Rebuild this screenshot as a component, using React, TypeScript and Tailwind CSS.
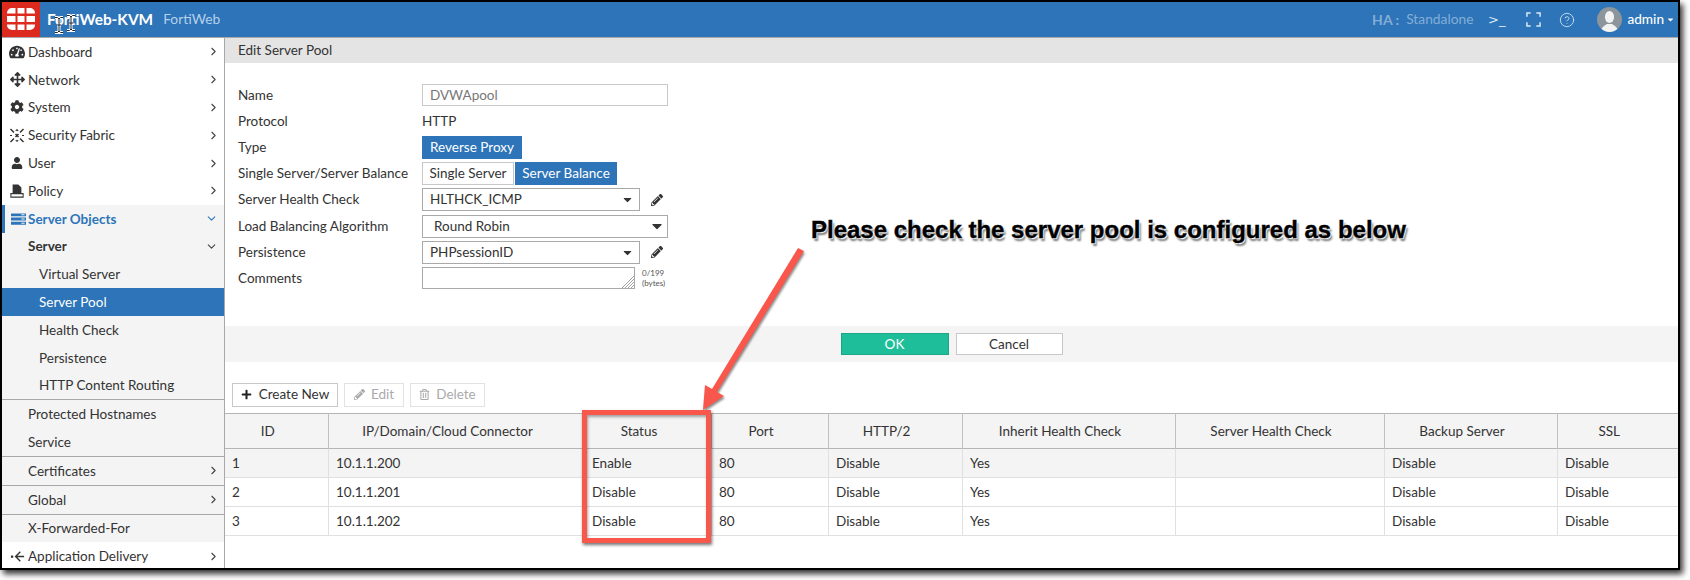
import React from 'react';
import { FaTachometerAlt, FaArrowsAlt, FaCog, FaUser, FaPencilAlt, FaPlus, FaRegTrashAlt, FaCaretDown } from 'react-icons/fa';
import { LuChevronRight, LuChevronDown, LuCircleHelp } from 'react-icons/lu';

const FabricIcon = () => (
  <svg viewBox="0 0 16 16" className="w-[16px] h-[16px]" fill="none" stroke="#333" strokeWidth="1.5">
    <path d="M1.500 2 5 5.500M6.500 7 9.500 10M11 11.500 14.500 15M14.500 2 11 5.500M9.500 7 6.500 10M5 11.500 1.500 15" />
    <path d="M8 2.500 6.800 4M8 2.500 9.200 4M8 14.500 6.800 13M8 14.500 9.200 13M1 8.500h2M13 8.500h2" strokeWidth="1.100" />
  </svg>
);

const DeliveryIcon = () => (
  <svg viewBox="0 0 16 16" className="w-[15px] h-[15px]" fill="none" stroke="#333" strokeWidth="1.500">
    <path d="M15 8H7M11 3 6 8l5 5" />
    <rect x="1" y="7" width="2.400" height="2.400" fill="#333" stroke="none" />
  </svg>
);

const PolicyIcon = () => (
  <svg viewBox="0 0 16 16" className="w-[14px] h-[14px]">
    <path d="M3 0.500h6.500L13 4v7H3z" fill="#333" />
    <path d="M1 11h14v4H1z" fill="#fff" stroke="#333" strokeWidth="1.200" />
  </svg>
);

const ServerIcon = () => (
  <svg viewBox="0 0 16 14" className="w-[15px] h-[14px]" fill="#2d74b8">
    <path d="M0 1h16v3H0zM0 5.500h16v3H0zM0 10h16v3H0z" />
    <path d="M11 2h3.500v1H11zM11 6.500h3.500v1H11zM11 11h3.500v1H11z" fill="#f4f4f4" />
  </svg>
);

const FortinetLogo = () => (
  <svg viewBox="0 0 28 22" className="w-[28px] h-[22px]" fill="#fff">
    <path d="M10.500 0h7v5.500h-7zM10.500 8h7v6h-7zM10.500 16.500h7V22h-7z" />
    <path d="M8.500 0H5a5 5 0 0 0-5 5v.500h8.500zM19.500 0H23a5 5 0 0 1 5 5v.500h-8.500zM0 8h8.500v6H0zM19.500 8H28v6h-8.500zM0 16.500h8.500V22H5a5 5 0 0 1-5-5zM19.500 16.500H28v.500a5 5 0 0 1-5 5h-3.500z" />
  </svg>
);

const IBeam = ({ className }: { className: string }) => (
  <svg viewBox="0 0 10 18" className={`absolute w-[10px] h-[18px] ${className}`}>
    <path d="M1 1.500h2.500L5 3l1.500-1.500H9M5 3v12M1 16.500h2.500L5 15l1.500 1.500H9M3 9h4" fill="none" stroke="#fff" strokeWidth="3" />
    <path d="M1 1.500h2.500L5 3l1.500-1.500H9M5 3v12M1 16.500h2.500L5 15l1.500 1.500H9M3 9h4" fill="none" stroke="#222" strokeWidth="1" />
  </svg>
);

type NavItem = {
  label: string;
  icon?: React.ReactNode;
  arrow?: 'right' | 'down';
  tone?: 'plain' | 'open' | 'group' | 'child' | 'active' | 'sub';
  divider?: boolean;
};

const navItems: NavItem[] = [
  { label: 'Dashboard', icon: <FaTachometerAlt size={16} />, arrow: 'right' },
  { label: 'Network', icon: <FaArrowsAlt size={15} />, arrow: 'right' },
  { label: 'System', icon: <FaCog size={14} />, arrow: 'right' },
  { label: 'Security Fabric', icon: <FabricIcon />, arrow: 'right' },
  { label: 'User', icon: <FaUser size={12} />, arrow: 'right' },
  { label: 'Policy', icon: <PolicyIcon />, arrow: 'right' },
  { label: 'Server Objects', icon: <ServerIcon />, arrow: 'down', tone: 'open' },
  { label: 'Server', arrow: 'down', tone: 'group' },
  { label: 'Virtual Server', tone: 'child' },
  { label: 'Server Pool', tone: 'active' },
  { label: 'Health Check', tone: 'child' },
  { label: 'Persistence', tone: 'child' },
  { label: 'HTTP Content Routing', tone: 'child', divider: true },
  { label: 'Protected Hostnames', tone: 'sub' },
  { label: 'Service', tone: 'sub', divider: true },
  { label: 'Certificates', tone: 'sub', arrow: 'right', divider: true },
  { label: 'Global', tone: 'sub', arrow: 'right', divider: true },
  { label: 'X-Forwarded-For', tone: 'sub' },
  { label: 'Application Delivery', icon: <DeliveryIcon />, arrow: 'right' },
];

const SidebarRow = ({ item }: { item: NavItem }) => {
  const tone = item.tone ?? 'plain';
  let cls = 'bg-white text-[#333]';
  if (tone === 'open') cls = 'bg-[#f4f4f4] text-[#2d74b8] font-bold border-l-[3px] border-[#2d74b8]';
  if (tone === 'group') cls = 'bg-[#f4f4f4] text-[#333] font-bold';
  if (tone === 'child' || tone === 'sub') cls = 'bg-[#f4f4f4] text-[#333]';
  if (tone === 'active') cls = 'bg-[#2d74b8] text-white';
  const indent = tone === 'child' || tone === 'active' ? 'pl-[37px]' : tone === 'open' ? 'pl-[23px]' : 'pl-[26px]';
  return (
    <div className={`relative shrink-0 flex items-center pr-[4px] ${indent} ${cls} ${item.divider ? 'h-[28.8px] border-b border-[#a8a8a8]' : 'h-[27.8px]'}`}>
      {item.icon && (
        <span className={`absolute w-[16px] flex justify-center text-[#333] ${tone === 'open' ? 'left-[5px]' : 'left-[7px]'}`}>
          {item.icon}
        </span>
      )}
      <span className="flex-1">{item.label}</span>
      {item.arrow === 'right' && <LuChevronRight size={13} className="text-[#444]" />}
      {item.arrow === 'down' && <LuChevronDown size={13} className={tone === 'open' ? 'text-[#2d74b8] mr-[2px]' : 'text-[#444] mr-[2px]'} />}
    </div>
  );
};

const FormRow = ({ label, h, children }: { label: string; h: string; children?: React.ReactNode }) => (
  <div className={`flex items-center ${h}`}>
    <div className="w-[184px] shrink-0">{label}</div>
    {children}
  </div>
);

const SelectBox = ({ value, wide }: { value: string; wide?: boolean }) => (
  <div className={`h-[23px] border border-[#a9a9a9] flex items-center justify-between ${wide ? 'w-[246px] pl-[11px] pr-[2px]' : 'w-[218px] pl-[7px] pr-[5px]'}`}>
    <span>{value}</span>
    <FaCaretDown size={wide ? 16 : 13} className="text-[#333]" />
  </div>
);

const columns = ['ID', 'IP/Domain/Cloud Connector', 'Status', 'Port', 'HTTP/2', 'Inherit Health Check', 'Server Health Check', 'Backup Server', 'SSL'];
const colWidths = ['w-[103px]', 'w-[256px]', 'w-[127px]', 'w-[117px]', 'w-[134px]', 'w-[213px]', 'w-[209px]', 'w-[173px]', 'w-[121px]'];
const rows = [
  ['1', '10.1.1.200', 'Enable', '80', 'Disable', 'Yes', '', 'Disable', 'Disable'],
  ['2', '10.1.1.201', 'Disable', '80', 'Disable', 'Yes', '', 'Disable', 'Disable'],
  ['3', '10.1.1.202', 'Disable', '80', 'Disable', 'Yes', '', 'Disable', 'Disable'],
];

export default function App() {
  return (
    <div className="w-[1690px] h-[580px] bg-white overflow-hidden">
      <div className="relative w-[1680px] h-[570px] border-2 border-black flex flex-col text-[13.5px] text-[#333] shadow-[3px_4px_6px_rgba(0,0,0,0.8)] font-['Lato',sans-serif]">
        {/* Top bar */}
        <header className="h-[36px] shrink-0 bg-[#2d74b8] border-b border-[#a8a8a8] flex items-center text-white">
          <div className="w-[38px] h-full bg-[#dc2a1e] flex items-center justify-center pb-[1px]">
            <FortinetLogo />
          </div>
          <span className="ml-[7px] text-[15.4px] font-bold">FortiWeb-KVM</span>
          <span className="ml-[10px] text-[13.8px] text-[#b5d0ea]">FortiWeb</span>
          <span className="ml-auto text-[14px] font-bold text-[#84aed6]">HA :</span>
          <span className="ml-[7px] text-[13.8px] text-[#84aed6]">Standalone</span>
          <span className="ml-[14.5px] text-[13px] text-[#dce8f4] font-['DejaVu_Sans',sans-serif]">&gt;_</span>
          <svg viewBox="0 0 16 16" className="ml-[21px] w-[15px] h-[15px]" fill="none" stroke="#dce8f4" strokeWidth="1.600">
            <path d="M1 5V1h4M11 1h4v4M15 11v4h-4M5 15H1v-4" />
          </svg>
          <LuCircleHelp size={16} className="ml-[18px] text-[#d5e4f3]" strokeWidth={1.3} />
          <div className="ml-[22px] w-[25px] h-[25px] rounded-full bg-[#8c949c] overflow-hidden flex items-end justify-center">
            <svg viewBox="0 0 25 25" className="w-[25px] h-[25px]" fill="#f2f2f2">
              <ellipse cx="12.500" cy="10" rx="4.600" ry="6" />
              <path d="M4 25c0-5 4-6.500 6-8h5c2 1.500 6 3 6 8z" />
            </svg>
          </div>
          <span className="ml-[5px] text-[13.6px] font-medium">admin</span>
          <FaCaretDown size={9} className="ml-[2px] mr-[3px]" />
        </header>

        <div className="flex-1 flex min-h-0">
          {/* Sidebar */}
          <aside className="w-[223px] shrink-0 border-r border-[#a8a8a8] flex flex-col overflow-hidden">
            {navItems.map((item) => (
              <SidebarRow key={item.label} item={item} />
            ))}
          </aside>

          {/* Main */}
          <main className="flex-1 min-w-0 flex flex-col">
            <div className="h-[25px] shrink-0 bg-[#e4e4e4] pl-[13px] flex items-center">Edit Server Pool</div>

            <div className="pl-[13px] pt-[20px] h-[263px] shrink-0">
              <FormRow label="Name" h="h-[24px]">
                <div className="w-[246px] h-[22px] border border-[#c8c8c8] px-[7px] flex items-center text-[#777]">DVWApool</div>
              </FormRow>
              <FormRow label="Protocol" h="h-[28px]">HTTP</FormRow>
              <FormRow label="Type" h="h-[25px]">
                <div className="w-[100px] h-[23px] bg-[#2d74b8] text-white flex items-center justify-center">Reverse Proxy</div>
              </FormRow>
              <FormRow label="Single Server/Server Balance" h="h-[26px]">
                <div className="flex h-[23px]">
                  <div className="w-[92px] border border-[#c8c8c8] flex items-center justify-center">Single Server</div>
                  <div className="w-[102px] ml-px bg-[#2d74b8] text-white flex items-center justify-center">Server Balance</div>
                </div>
              </FormRow>
              <FormRow label="Server Health Check" h="h-[27px]">
                <SelectBox value="HLTHCK_ICMP" />
                <FaPencilAlt size={12} className="ml-[11px] text-[#333]" />
              </FormRow>
              <FormRow label="Load Balancing Algorithm" h="h-[26px]">
                <SelectBox value="Round Robin" wide />
              </FormRow>
              <FormRow label="Persistence" h="h-[26px]">
                <SelectBox value="PHPsessionID" />
                <FaPencilAlt size={12} className="ml-[11px] text-[#333]" />
              </FormRow>
              <FormRow label="Comments" h="h-[26px]">
                <div className="relative w-[213px] h-[22px] border border-[#a9a9a9]">
                  <svg viewBox="0 0 12 12" className="absolute right-0 bottom-0 w-[12px] h-[12px]" stroke="#888" strokeWidth="0.800">
                    <path d="M0 12 12 0M3 12l9-9M6 12l6-6M9 12l3-3" />
                  </svg>
                </div>
                <div className="ml-[7px] text-[8px] leading-[10px] text-[#555]">
                  0/199
                  <br />
                  (bytes)
                </div>
              </FormRow>
            </div>

            <div className="h-[36px] shrink-0 bg-[#f4f4f4] flex items-center justify-center gap-[7px]">
              <div className="w-[108px] h-[22px] bg-[#1fbe9a] border border-[#1aa887] text-white flex items-center justify-center">OK</div>
              <div className="w-[107px] h-[22px] bg-white border border-[#c8c8c8] flex items-center justify-center">Cancel</div>
            </div>

            {/* Toolbar */}
            <div className="h-[51px] shrink-0 pl-[7px] pt-[20px] flex gap-[6px]">
              <div className="w-[106px] h-[24px] mt-[0.5px] border border-[#c8c8c8] flex items-center justify-center gap-[7px]">
                <FaPlus size={11} className="text-[#222]" />
                <span>Create New</span>
              </div>
              <div className="w-[60px] h-[24px] mt-[0.5px] border border-[#e2e2e2] flex items-center justify-center gap-[6px] text-[#aaa]">
                <FaPencilAlt size={11} />
                <span>Edit</span>
              </div>
              <div className="w-[75px] h-[24px] mt-[0.5px] border border-[#e2e2e2] flex items-center justify-center gap-[6px] text-[#aaa]">
                <FaRegTrashAlt size={11} />
                <span>Delete</span>
              </div>
            </div>

            {/* Table */}
            <table className="w-full table-fixed border-collapse">
              <colgroup>
                {colWidths.map((w, i) => (
                  <col key={i} className={w} />
                ))}
              </colgroup>
              <thead>
                <tr className="h-[35px] bg-[#f4f4f4] border-y border-[#b5b5b5]">
                  {columns.map((c) => (
                    <th key={c} className="font-normal text-center pr-[17px] border-r border-[#c0c0c0] last:border-r-0">{c}</th>
                  ))}
                </tr>
              </thead>
              <tbody>
                {rows.map((row, r) => (
                  <tr key={r} className={`h-[29px] border-b border-[#e0e0e0] ${r === 0 ? 'bg-[#f4f4f4]' : ''}`}>
                    {row.map((cell, i) => (
                      <td key={i} className="pl-[7.5px] first:pl-[7px] border-r border-[#e0e0e0] last:border-r-0">{cell}</td>
                    ))}
                  </tr>
                ))}
              </tbody>
            </table>
          </main>
        </div>

        {/* Annotation over the screenshot */}
        <IBeam className="left-[52px] top-[14px]" />
        <IBeam className="left-[64px] top-[12px]" />
        <div className="absolute left-[809px] top-[214px] text-[24px] leading-[28px] font-bold text-black whitespace-nowrap font-['Liberation_Sans',sans-serif] [-webkit-text-stroke:0.4px_black] [text-shadow:0_0_2px_#fff,1px_1px_1px_#fff,2px_3px_2px_#777]">
          Please check the server pool is configured as below
        </div>
        <svg className="absolute left-[690px] top-[240px] w-[120px] h-[175px] drop-shadow-[1px_2px_1px_rgba(0,0,0,0.45)]" viewBox="0 0 120 175" fill="#f9574c">
          <path d="M106 6 L112 9 L25 150 L32 154 L11 168 L13 143 L20 147 Z" />
        </svg>
        <div className="absolute left-[580px] top-[408px] w-[129px] h-[133px] border-[5px] border-[#f9574c] shadow-[1px_2px_3px_rgba(0,0,0,0.55),inset_1px_2px_3px_rgba(0,0,0,0.35)]" />
      </div>
    </div>
  );
}
